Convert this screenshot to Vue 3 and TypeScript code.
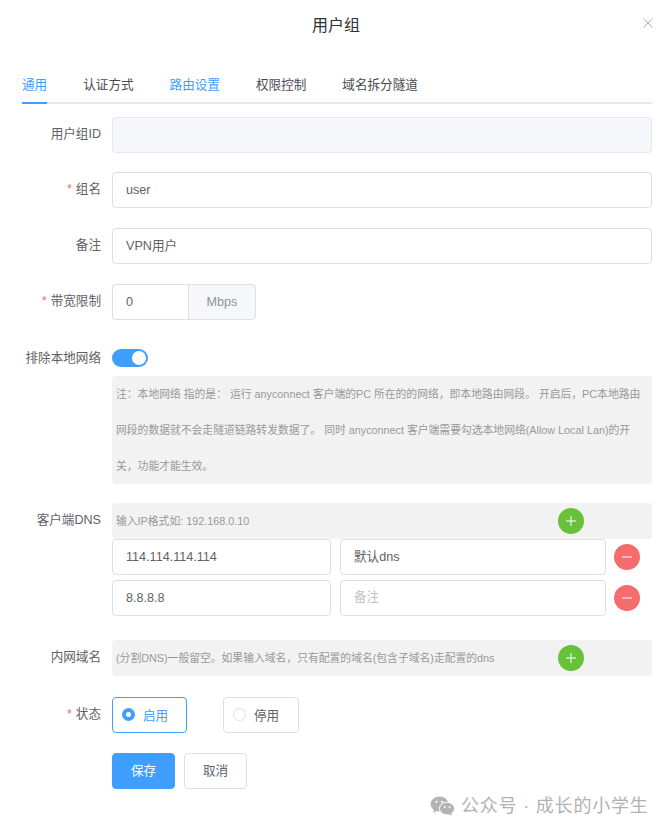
<script setup lang="ts">
const tabs = [
  { name: '通用', cls: 'active' },
  { name: '认证方式', cls: '' },
  { name: '路由设置', cls: 'blue' },
  { name: '权限控制', cls: '' },
  { name: '域名拆分隧道', cls: '' },
]
const dns = [
  { ip: '114.114.114.114', note: '默认dns' },
  { ip: '8.8.8.8', note: '' },
]
</script>

<template>
  <div class="dialog">
    <header class="head">
      <span class="title">用户组</span>
      <svg class="close" width="10" height="10" viewBox="0 0 10 10"><path d="M.5.5l9 9M9.5.5l-9 9" stroke="#a9acb2" stroke-width="1" fill="none" /></svg>
    </header>
    <nav class="tabs">
      <span v-for="t in tabs" :key="t.name" class="tab" :class="t.cls">{{ t.name }}</span>
    </nav>

    <div class="row r-id">
      <label class="label">用户组ID</label>
      <input class="input disabled" disabled />
    </div>
    <div class="row r-name">
      <label class="label"><i>*</i>组名</label>
      <input class="input" value="user" readonly />
    </div>
    <div class="row r-note">
      <label class="label">备注</label>
      <input class="input cjk" value="VPN用户" readonly />
    </div>
    <div class="row r-band">
      <label class="label"><i>*</i>带宽限制</label>
      <div class="group">
        <input class="input num" value="0" readonly />
        <span class="unit">Mbps</span>
      </div>
    </div>
    <div class="row r-switch">
      <label class="label">排除本地网络</label>
      <span class="switch"><span class="knob"></span></span>
    </div>
    <div class="row r-tip">
      <span class="label"></span>
      <div class="tip">注：本地网络 指的是： 运行 anyconnect 客户端的PC 所在的的网络，即本地路由网段。 开启后，PC本地路由网段的数据就不会走隧道链路转发数据了。 同时 anyconnect 客户端需要勾选本地网络(Allow Local Lan)的开关，功能才能生效。</div>
    </div>
    <div class="row r-dns">
      <label class="label">客户端DNS</label>
      <div class="hint">
        <span class="hint-text">输入IP格式如: 192.168.0.10</span>
        <span class="round green"><svg width="12" height="12" viewBox="0 0 12 12"><path d="M6 1v10M1 6h10" stroke="#fff" stroke-width="1" /></svg></span>
      </div>
    </div>
    <div v-for="d in dns" :key="d.ip" class="dns-row">
      <input class="input ip" :value="d.ip" readonly />
      <input class="input rem cjk" :value="d.note" placeholder="备注" readonly />
      <span class="round red"><svg width="12" height="12" viewBox="0 0 12 12"><path d="M1 6h10" stroke="#fff" stroke-width="1" /></svg></span>
    </div>
    <div class="row r-domain">
      <label class="label">内网域名</label>
      <div class="hint">
        <span class="hint-text">(分割DNS)一般留空。如果输入域名，只有配置的域名(包含子域名)走配置的dns</span>
        <span class="round green"><svg width="12" height="12" viewBox="0 0 12 12"><path d="M6 1v10M1 6h10" stroke="#fff" stroke-width="1" /></svg></span>
      </div>
    </div>
    <div class="row r-status">
      <label class="label"><i>*</i>状态</label>
      <div class="radios">
        <span class="radio on"><span class="dot"></span>启用</span>
        <span class="radio off"><span class="dot"></span>停用</span>
      </div>
    </div>
    <div class="row r-btn">
      <span class="label"></span>
      <button class="btn primary">保存</button>
      <button class="btn">取消</button>
    </div>

    <div class="mark">
      <svg width="25" height="20" viewBox="0 0 25 20">
        <ellipse cx="9.5" cy="8" rx="9" ry="7.6" fill="#b4b4b4" />
        <path d="M4 13l-.6 4 4-2.4z" fill="#b4b4b4" />
        <ellipse cx="17" cy="12.6" rx="7.6" ry="6.3" fill="#b4b4b4" stroke="#fff" stroke-width="1" />
        <path d="M21 17l1.2 2.8-4-1.6z" fill="#b4b4b4" />
        <circle cx="6.5" cy="5.8" r="1.1" fill="#fff" />
        <circle cx="12" cy="5.8" r="1.1" fill="#fff" />
        <circle cx="14.6" cy="11" r="1" fill="#fff" />
        <circle cx="19.6" cy="11" r="1" fill="#fff" />
      </svg>
      <span>公众号 · 成长的小学生</span>
    </div>
  </div>
</template>

<style scoped>
.dialog {
  position: relative;
  width: 670px;
  height: 833px;
  padding: 0 18px 0 22px;
  box-sizing: border-box;
  overflow: hidden;
  background: #fff;
  color: #606266;
  font: 12.6px "Liberation Sans", "Noto Sans CJK SC", sans-serif;
}
.head {
  height: 73px;
  display: flex;
  justify-content: center;
  position: relative;
  padding-top: 15px;
  box-sizing: border-box;
}
.title {
  font-size: 16px;
  line-height: 22px;
  color: #303133;
  margin-left: -2px;
}
.close {
  position: absolute;
  right: -1px;
  top: 18px;
}
.tabs {
  display: flex;
  gap: 36px;
  height: 29px;
  border-bottom: 2px solid #e4e7ed;
  position: relative;
  line-height: 24px;
}
.tab {
  color: #4a4c52;
  height: 31px;
  box-sizing: border-box;
  white-space: nowrap;
}
.tab.active {
  color: #409eff;
  border-bottom: 2px solid #409eff;
}
.tab.blue {
  color: #409eff;
}
.row {
  display: flex;
  align-items: flex-start;
}
.label {
  flex: none;
  padding-right: 11px;
  margin-left: -11px;
  width: 90px;
  text-align: right;
  line-height: 34px;
  color: #606266;
  white-space: nowrap;
}
.label i {
  color: #f56c6c;
  font-style: normal;
  margin-right: 4px;
}
.input {
  display: block;
  flex: 1;
  min-width: 0;
  height: 36px;
  border: 1px solid #dcdfe6;
  border-radius: 4px;
  padding: 0 13px;
  box-sizing: border-box;
  background: #fff;
  color: #606266;
  font: inherit;
  line-height: 20px;
  outline: none;
}
.input.cjk {
  padding-bottom: 3px;
}
.input::placeholder {
  color: #c0c4cc;
}
.input.disabled {
  background: #f5f7fa;
  border-color: #e4e7ed;
}
.r-id { margin-top: 13px; }
.r-name { margin-top: 19px; }
.r-note { margin-top: 20px; }
.r-band { margin-top: 20px; }
.group {
  display: flex;
  width: 144px;
}
.num {
  flex: none;
  width: 76px;
  border-radius: 4px 0 0 4px;
  border-right: 0;
}
.unit {
  flex: 1;
  height: 36px;
  line-height: 34px;
  box-sizing: border-box;
  text-align: center;
  border: 1px solid #dcdfe6;
  border-radius: 0 4px 4px 0;
  background: #f5f7fa;
  color: #909399;
}
.r-switch {
  margin-top: 29px;
  height: 18px;
}
.r-switch .label {
  line-height: 18px;
}
.switch {
  width: 36px;
  height: 18px;
  border-radius: 9px;
  background: #409eff;
  position: relative;
}
.knob {
  position: absolute;
  right: 2px;
  top: 2px;
  width: 14px;
  height: 14px;
  border-radius: 50%;
  background: #fff;
}
.r-tip {
  margin-top: 9px;
}
.tip {
  flex: 1;
  min-width: 0;
  background: #f2f2f2;
  border-radius: 4px;
  padding: 0 9.5px 0 4px;
  font-size: 10.8px;
  line-height: 36px;
  color: #999;
}
.r-dns {
  margin-top: 19px;
}
.hint {
  flex: 1;
  height: 36px;
  background: #f2f2f2;
  border-radius: 4px;
  padding-left: 4px;
  position: relative;
  font-size: 10.8px;
  line-height: 36px;
  color: #999;
  white-space: nowrap;
}
.round {
  width: 26px;
  height: 26px;
  border-radius: 50%;
  display: flex;
  align-items: center;
  justify-content: center;
  flex: none;
}
.green {
  background: #67c23a;
  position: absolute;
  left: 446px;
  top: 5px;
}
.red {
  background: #f56c6c;
  margin-left: 8px;
}
.dns-row {
  display: flex;
  align-items: center;
  padding-left: 90px;
  margin-bottom: 5px;
}
.ip {
  flex: none;
  width: 219px;
}
.rem {
  flex: none;
  width: 266px;
  margin-left: 9px;
}
.r-domain {
  margin-top: 24px;
}
.r-status {
  margin-top: 21px;
}
.radios {
  display: flex;
  gap: 36px;
}
.radio {
  width: 75px;
  height: 36px;
  border: 1px solid #dcdfe6;
  border-radius: 4px;
  box-sizing: border-box;
  display: flex;
  align-items: center;
  padding: 0 0 2px 9px;
  gap: 8px;
  color: #606266;
}
.radio.off {
  width: 76px;
}
.radio.on {
  border-color: #409eff;
  color: #409eff;
}
.dot {
  width: 13px;
  height: 13px;
  border-radius: 50%;
  border: 1px solid #dcdfe6;
  box-sizing: border-box;
  background: #fff;
}
.radio.on .dot {
  border: 4px solid #409eff;
}
.r-btn {
  margin-top: 20px;
}
.btn {
  width: 63px;
  height: 36px;
  border: 1px solid #dcdfe6;
  border-radius: 4px;
  background: #fff;
  color: #606266;
  font: inherit;
  padding: 0 0 3px;
  margin-right: 9px;
}
.btn.primary {
  background: #409eff;
  border-color: #409eff;
  color: #fff;
  margin-right: 10px;
}
.btn.primary + .btn {
  margin-left: -1px;
}
.mark {
  position: absolute;
  left: 430px;
  top: 795px;
  display: flex;
  align-items: center;
  gap: 6px;
  font-size: 18px;
  line-height: 22px;
  color: #b2b2b2;
  white-space: nowrap;
  letter-spacing: 0.8px;
}
</style>
